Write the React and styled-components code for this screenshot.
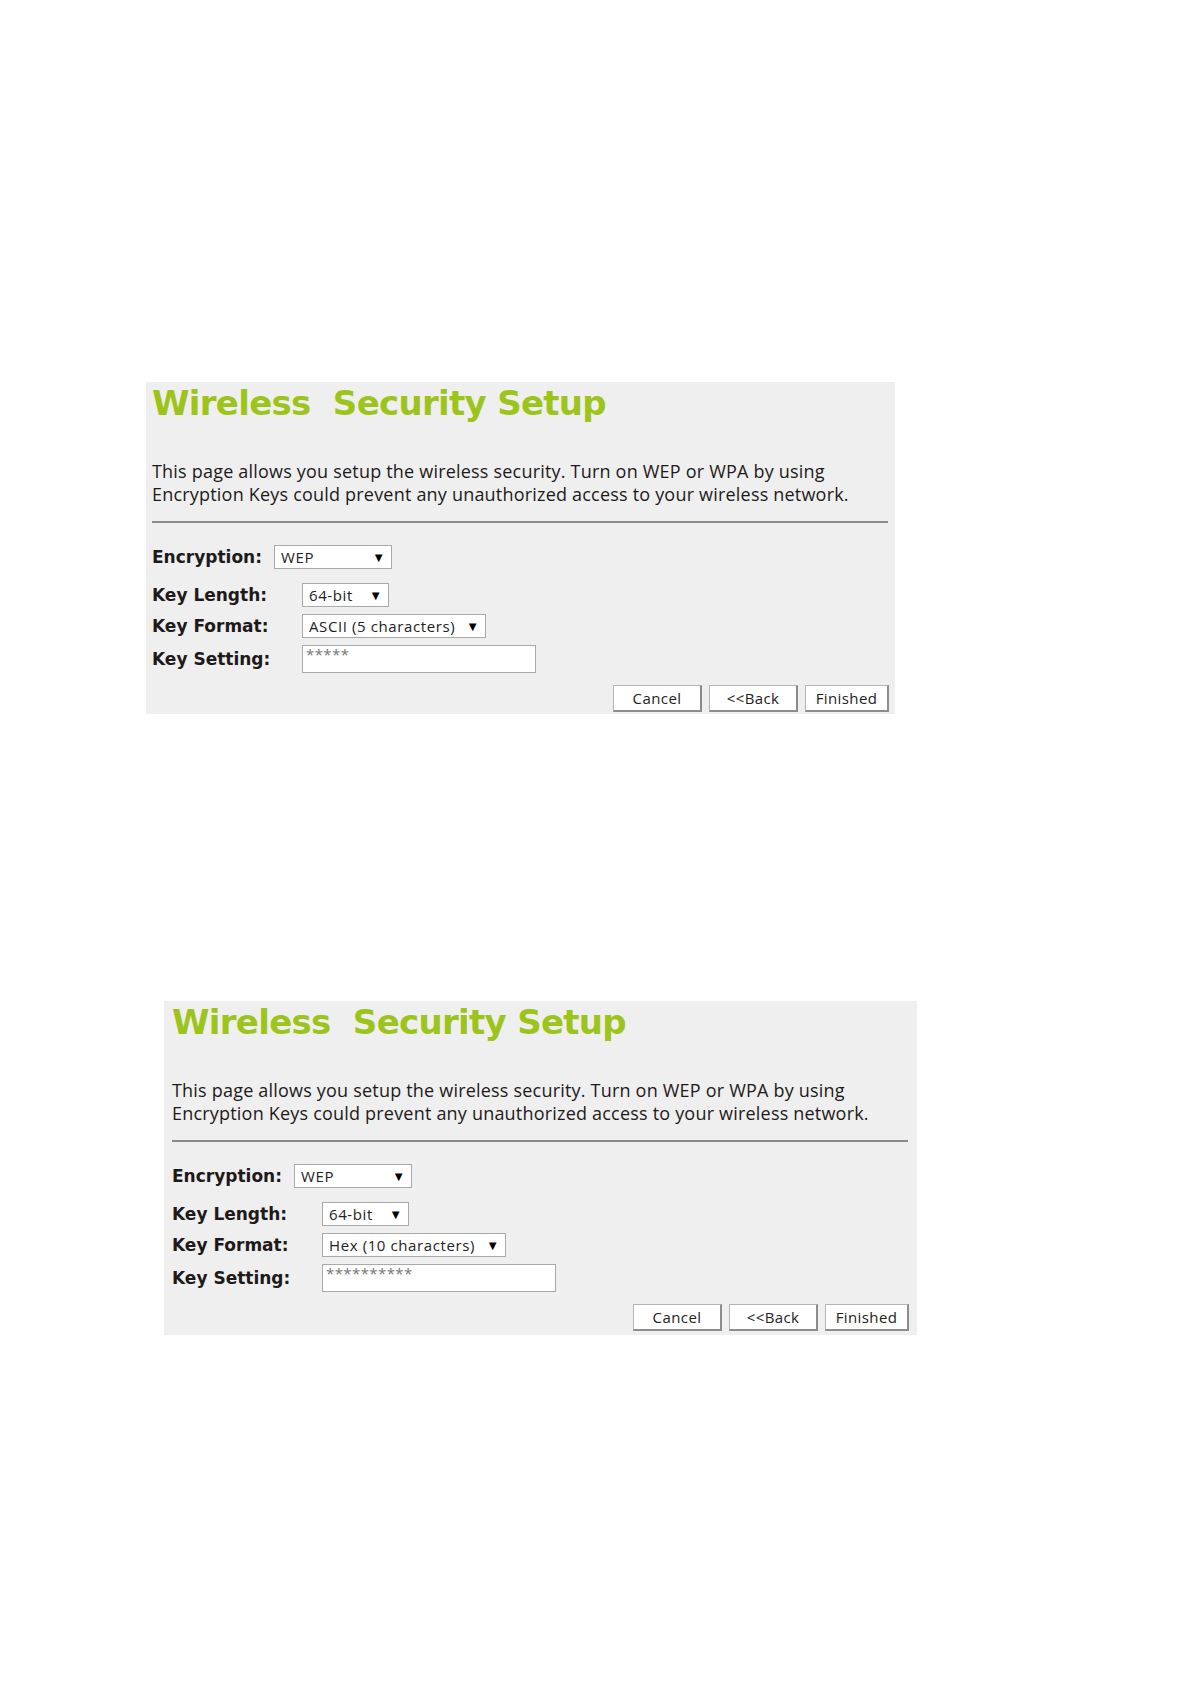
import React from "react";
import styled, { createGlobalStyle } from "styled-components";

const GlobalStyle = createGlobalStyle`
  body {
    margin: 0;
    background: #fff;
  }
`;

const Page = styled.div`
  width: 1191px;
  min-height: 1684px;
  box-sizing: border-box;
  padding-top: 382px;
  display: flex;
  flex-direction: column;
  gap: 287px;
`;

const Panel = styled.section`
  margin-left: ${(p) => p.$left}px;
  width: ${(p) => p.$width}px;
  height: ${(p) => p.$height}px;
  box-sizing: border-box;
  padding: 0 ${(p) => p.$pad}px;
  background: #efefef;
  display: flex;
  flex-direction: column;
  font-family: "Open Sans", "Noto Sans", sans-serif;
  color: #1e1a1a;
`;

const Title = styled.h1`
  margin: 0;
  height: 40px;
  line-height: 42px;
  font-family: "DejaVu Sans", Verdana, sans-serif;
  font-size: 34px;
  font-weight: bold;
  color: #9dc41a;
  white-space: pre;
  letter-spacing: -0.7px;
`;

const Intro = styled.p`
  margin: 38px 0 0;
  font-size: 18px;
  line-height: 23px;
  letter-spacing: 0.2px;
`;

const Divider = styled.hr`
  margin: 15px 1px 0 0;
  border: 0;
  border-top: 2px solid #8a8a8a;
`;

const Field = styled.div`
  display: flex;
  align-items: center;
  height: ${(p) => p.$h || 24}px;
  margin-top: ${(p) => p.$top}px;
`;

const Label = styled.span`
  width: ${(p) => p.$w}px;
  flex: none;
  font-family: "DejaVu Sans", Verdana, sans-serif;
  font-weight: bold;
  font-size: 17px;
`;

const Select = styled.div`
  width: ${(p) => p.$w}px;
  height: 24px;
  box-sizing: border-box;
  display: flex;
  align-items: center;
  justify-content: space-between;
  padding: 0 6px 0 6px;
  background: #fff;
  border: 1px solid #a9a9a9;
  font-size: 15px;
  letter-spacing: 0.6px;
  color: #222;
`;

const Arrow = styled.span`
  font-size: 13px;
  letter-spacing: 0;
  color: #000;
`;

const KeyInput = styled.div`
  width: 234px;
  height: 28px;
  box-sizing: border-box;
  padding: 0 3px;
  background: #fff;
  border: 1px solid #a9a9a9;
  font-size: 15px;
  line-height: 16px;
  color: #777;
  letter-spacing: 0.4px;
`;

const Actions = styled.div`
  display: flex;
  justify-content: flex-end;
  gap: 7px;
  margin-top: 12px;
`;

const Button = styled.button`
  width: ${(p) => p.$w}px;
  height: 27px;
  box-sizing: border-box;
  padding: 0;
  background: #fff;
  border: 1px solid #b5b5b5;
  border-right: 2px solid #8c8c8c;
  border-bottom: 2px solid #8c8c8c;
  font-family: "Open Sans", "Noto Sans", sans-serif;
  font-size: 15px;
  letter-spacing: 0.4px;
  color: #222;
`;

const SetupPanel = ({ left, width, height, pad, format, stars }) => (
  <Panel $left={left} $width={width} $height={height} $pad={pad}>
    <Title>{"Wireless  Security Setup"}</Title>
    <Intro>
      This page allows you setup the wireless security. Turn on WEP or WPA by
      using
      <br />
      Encryption Keys could prevent any unauthorized access to your wireless
      network.
    </Intro>
    <Divider />
    <Field $top={22}>
      <Label $w={122}>Encryption:</Label>
      <Select $w={118}>
        WEP<Arrow>▼</Arrow>
      </Select>
    </Field>
    <Field $top={14}>
      <Label $w={150}>Key Length:</Label>
      <Select $w={87}>
        64-bit<Arrow>▼</Arrow>
      </Select>
    </Field>
    <Field $top={7}>
      <Label $w={150}>Key Format:</Label>
      <Select $w={184}>
        {format}
        <Arrow>▼</Arrow>
      </Select>
    </Field>
    <Field $top={7} $h={28}>
      <Label $w={150}>Key Setting:</Label>
      <KeyInput>{stars}</KeyInput>
    </Field>
    <Actions>
      <Button $w={89}>Cancel</Button>
      <Button $w={89}>{"<<Back"}</Button>
      <Button $w={84}>Finished</Button>
    </Actions>
  </Panel>
);

export default function App() {
  return (
    <>
      <GlobalStyle />
      <Page>
        <SetupPanel
          left={146}
          width={749}
          height={332}
          pad={6}
          format="ASCII (5 characters)"
          stars="*****"
        />
        <SetupPanel
          left={164}
          width={753}
          height={334}
          pad={8}
          format="Hex (10 characters)"
          stars="**********"
        />
      </Page>
    </>
  );
}
